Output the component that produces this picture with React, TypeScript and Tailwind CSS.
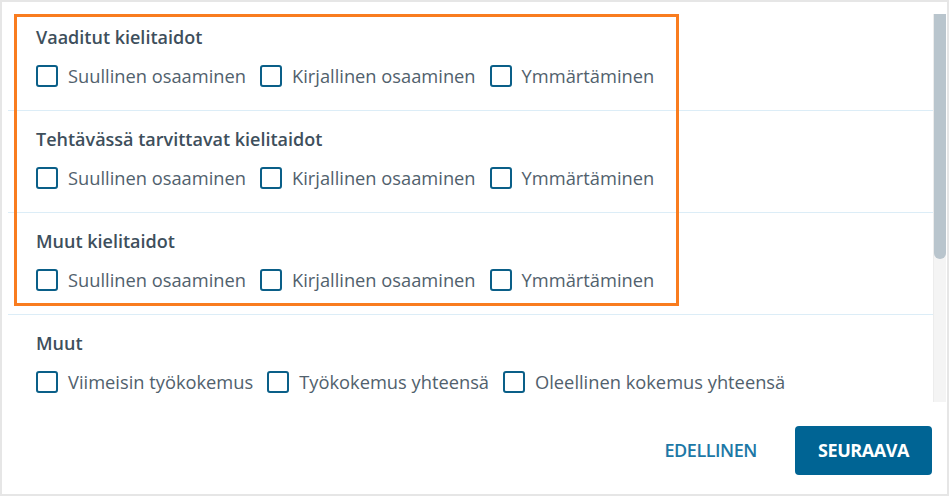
import React from 'react';

type Section = { title: string; options: string[] };

const sections: Section[] = [
  { title: 'Vaaditut kielitaidot', options: ['Suullinen osaaminen', 'Kirjallinen osaaminen', 'Ymmärtäminen'] },
  { title: 'Tehtävässä tarvittavat kielitaidot', options: ['Suullinen osaaminen', 'Kirjallinen osaaminen', 'Ymmärtäminen'] },
  { title: 'Muut kielitaidot', options: ['Suullinen osaaminen', 'Kirjallinen osaaminen', 'Ymmärtäminen'] },
  { title: 'Muut', options: ['Viimeisin työkokemus', 'Työkokemus yhteensä', 'Oleellinen kokemus yhteensä'] },
];

function Checkbox({ label }: { label: string }) {
  return (
    <label className="flex items-center gap-[10px] cursor-pointer">
      <span className="w-[22px] h-[22px] border-2 border-[#0a5f88] rounded-[3px] bg-white shrink-0"></span>
      <span className="text-[18.3px] leading-[22px] text-[#51616d]">{label}</span>
    </label>
  );
}

export default function App() {
  return (
    <div className="relative w-[949px] h-[496px] bg-white border-2 border-[#e6e6e6] flex flex-col font-['Open_Sans',_sans-serif] overflow-hidden">
      <div className="flex flex-row h-[400px] pl-[6px]">
        <div className="flex-1 flex flex-col pt-[7px] overflow-hidden">
          {sections.map((s, i) => (
            <div
              key={i}
              className="h-[102px] shrink-0 border-b border-[#dcedf7] pl-[28px] pt-[16px] flex flex-col"
            >
              <h3 className="text-[18px] leading-[25px] font-semibold text-[#3e4f5c]">{s.title}</h3>
              <div className="mt-[15px] flex flex-row gap-[14px]">
                {s.options.map((o) => (
                  <Checkbox key={o} label={o} />
                ))}
              </div>
            </div>
          ))}
        </div>
        <div className="w-[13px] mr-[1px] pt-[12px] flex flex-col">
          <div className="flex-1 bg-[#f4f4f4] border-l border-[#ececec]">
            <div className="h-[245px] bg-[#b9c5cd] rounded-b-[6px]"></div>
          </div>
        </div>
      </div>

      <div className="flex-1 flex flex-row items-center justify-end gap-[22px] pr-[15px] pt-[4px]">
        <button className="px-4 h-[49px] text-[18px] font-semibold text-[#1d78a6] tracking-tight">EDELLINEN</button>
        <button className="w-[137px] h-[49px] bg-[#006494] rounded-[4px] text-white text-[18px] font-bold tracking-tight">
          SEURAAVA
        </button>
      </div>

      <div className="absolute left-[12px] top-[12px] w-[665px] h-[292px] border-[3px] border-[#f97c1f] pointer-events-none"></div>
    </div>
  );
}
